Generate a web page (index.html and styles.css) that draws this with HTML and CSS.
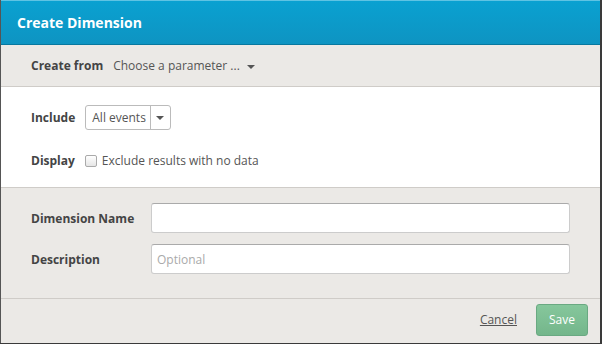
FILE: index.html
```html
<!DOCTYPE html>
<html lang="en">

<head>
    <meta charset="UTF-8">
    <title>Create Dimension</title>
    <link rel="stylesheet" href="styles.css">
</head>

<body>

    <div class="modal">
        <div class="modal-header">Create Dimension</div>

        <div class="section source">
            <span class="label">Create from</span>
            <span class="picker">Choose a parameter ... <span class="caret"></span></span>
        </div>

        <div class="section options">
            <div class="row">
                <span class="label">Include</span>
                <div class="select">
                    <span class="select-value">All events</span>
                    <span class="select-toggle"><span class="caret"></span></span>
                </div>
            </div>
            <div class="row">
                <span class="label">Display</span>
                <label class="check"><span class="box"></span>Exclude results with no data</label>
            </div>
        </div>

        <div class="section fields">
            <div class="field">
                <span class="label wide">Dimension Name</span>
                <input type="text" class="input">
            </div>
            <div class="field">
                <span class="label wide">Description</span>
                <input type="text" class="input" placeholder="Optional">
            </div>
        </div>

        <div class="modal-footer">
            <a class="cancel" href="#">Cancel</a>
            <button class="save">Save</button>
        </div>
    </div>

</body>

</html>
```
FILE: styles.css
```css
body {
    margin: 0;
    background-color: #3a3a3a;
    font-family: "Open Sans", Arial, sans-serif;
    font-size: 12px;
    color: #555;
}

/* Dialog shell */
.modal {
    width: 599px;
    height: 343px;
    border-left: 1px solid #555;
    background-color: #ebe9e6;
    display: flex;
    flex-direction: column;
    overflow: hidden;
}

.modal-header {
    height: 45px;
    box-sizing: border-box;
    padding: 0 16px;
    display: flex;
    align-items: center;
    background: linear-gradient(#0aa1d1, #0e94c2);
    border-top: 1px solid #5fc3e3;
    border-bottom: 1px solid #07789f;
    color: #fff;
    font-size: 14px;
    font-weight: bold;
}

.section {
    border-bottom: 1px solid #cfccc8;
}

.label {
    font-weight: bold;
    color: #444;
}

.caret {
    display: inline-block;
    width: 0;
    height: 0;
    border-left: 4px solid transparent;
    border-right: 4px solid transparent;
    border-top: 4px solid #555;
    vertical-align: middle;
    margin-left: 4px;
}

/* Create from */
.source {
    height: 42px;
    box-sizing: border-box;
    display: flex;
    align-items: center;
    padding: 0 30px;
    gap: 10px;
}

.picker {
    color: #555;
}

/* Include / Display */
.options {
    background-color: #fff;
    height: 101px;
    box-sizing: border-box;
    padding: 18px 30px 0;
    display: flex;
    flex-direction: column;
    gap: 22px;
}

.row {
    display: flex;
    align-items: center;
    gap: 10px;
}

.select {
    display: flex;
    height: 25px;
    box-sizing: border-box;
    border: 1px solid #bbb;
    border-radius: 3px;
}

.select-value {
    padding: 0 4px 0 6px;
    display: flex;
    align-items: center;
    color: #555;
}

.select-toggle {
    width: 19px;
    border-left: 1px solid #bbb;
    display: flex;
    align-items: center;
    justify-content: center;
}

.select-toggle .caret {
    margin-left: 0;
}

.check {
    display: flex;
    align-items: center;
    gap: 5px;
    color: #555;
}

.box {
    width: 10px;
    height: 10px;
    border: 1px solid #aaa;
    border-radius: 2px;
    background: linear-gradient(#fff, #e6e6e6);
}

/* Name / description */
.fields {
    height: 111px;
    box-sizing: border-box;
    padding: 15px 30px 0;
    display: flex;
    flex-direction: column;
    gap: 11px;
}

.field {
    display: flex;
    align-items: center;
}

.label.wide {
    width: 120px;
    flex-shrink: 0;
}

.input {
    width: 420px;
    height: 30px;
    box-sizing: border-box;
    border: 1px solid #ccc;
    border-top-color: #aaa;
    border-radius: 3px;
    padding: 0 5px;
    font-family: "Open Sans", Arial, sans-serif;
    font-size: 12px;
    color: #555;
    background-color: #fff;
}

.input::placeholder {
    color: #aaa;
}

/* Footer */
.modal-footer {
    flex: 1;
    display: flex;
    justify-content: flex-end;
    align-items: center;
    padding: 0 12px 3px 0;
    gap: 19px;
}

.cancel {
    color: #555;
    text-decoration: underline;
}

.save {
    width: 52px;
    height: 32px;
    border: 1px solid #6aa982;
    border-radius: 3px;
    background: linear-gradient(#86c79c, #74b68b);
    color: #fff;
    font-family: "Open Sans", Arial, sans-serif;
    font-size: 12px;
}
```
